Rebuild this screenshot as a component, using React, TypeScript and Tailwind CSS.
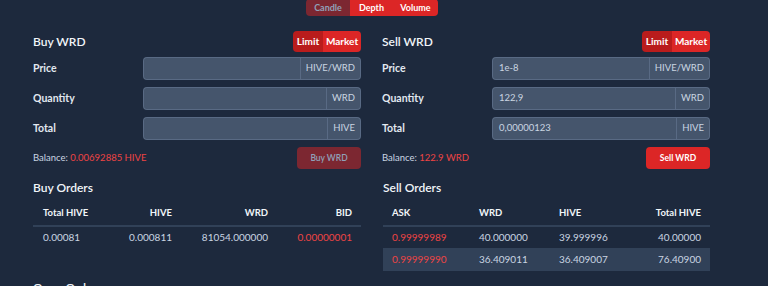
import React from "react";

interface FieldProps {
  label: string;
  value?: string;
  unit: string;
}

const Field = ({ label, value = "", unit }: FieldProps) => {
  return (
    <div className="flex items-center h-[23px]">
      <div className="w-[110px] shrink-0 text-[10.5px] font-bold text-slate-200">{label}</div>
      <div className="flex flex-1 h-full rounded-[4px] border border-slate-500/70 bg-slate-600 overflow-hidden">
        <div className="flex-1 flex items-center px-[6px] text-[9.5px] text-slate-300">{value}</div>
        <div className="flex items-center px-[5px] border-l border-slate-500/70 text-[9.5px] text-slate-300">{unit}</div>
      </div>
    </div>
  );
};

interface TradeFormProps {
  title: string;
  price?: string;
  quantity?: string;
  total?: string;
  balance: string;
  action: string;
  disabled?: boolean;
}

const TradeForm = ({ title, price, quantity, total, balance, action, disabled }: TradeFormProps) => {
  return (
    <div className="flex flex-col w-[328px]">
      <div className="flex items-center justify-between h-[21px] mt-[31px]">
        <h2 className="text-[12px] font-semibold text-slate-100">{title}</h2>
        <div className="flex h-[21px] rounded-[4px] overflow-hidden text-[10px] font-bold text-white">
          <div className="flex items-center justify-center w-[30px] bg-[#b91c1c]">Limit</div>
          <div className="flex items-center justify-center w-[38px] bg-[#dc2626]">Market</div>
        </div>
      </div>
      <div className="flex flex-col gap-[7px] mt-[5px]">
        <Field label="Price" value={price} unit="HIVE/WRD" />
        <Field label="Quantity" value={quantity} unit="WRD" />
        <Field label="Total" value={total} unit="HIVE" />
      </div>
      <div className="flex items-center justify-between mt-[7px] h-[22px]">
        <div className="text-[9.5px] text-slate-300">
          Balance: <span className="text-[#ef4444]">{balance}</span>
        </div>
        <button
          className={
            disabled
              ? "h-[22px] w-[64px] rounded-[4px] bg-[#dc2626]/50 text-[8.5px] font-semibold text-slate-400"
              : "h-[22px] w-[64px] rounded-[4px] bg-[#dc2626] text-[8.5px] font-bold text-white"
          }
        >
          {action}
        </button>
      </div>
    </div>
  );
};

const buyOrders = [{ total: "0.00081", hive: "0.000811", wrd: "81054.000000", bid: "0.00000001" }];

const sellOrders = [
  { ask: "0.99999989", wrd: "40.000000", hive: "39.999996", total: "40.00000" },
  { ask: "0.99999990", wrd: "36.409011", hive: "36.409007", total: "76.40900" },
];

const App = () => {
  return (
    <div className="w-[768px] h-[286px] overflow-hidden bg-slate-800" style={{ fontFamily: "Lato, 'Noto Sans', sans-serif" }}>
      <div className="ml-[33px] w-[677px] relative">
        <div className="absolute left-[273px] top-0 flex h-[17px] -mt-[1px] rounded-[4px] overflow-hidden text-[9px] font-bold">
          <div className="w-[44px] flex items-center justify-center bg-[#dc2626]/50 text-slate-400">Candle</div>
          <div className="w-[43px] flex items-center justify-center bg-[#dc2626] text-white">Depth</div>
          <div className="w-[45px] flex items-center justify-center bg-[#dc2626] text-white">Volume</div>
        </div>
        <div className="flex justify-between">
          <TradeForm title="Buy WRD" balance="0.00692885 HIVE" action="Buy WRD" disabled />
          <TradeForm
            title="Sell WRD"
            price="1e-8"
            quantity="122,9"
            total="0,00000123"
            balance="122.9 WRD"
            action="Sell WRD"
          />
        </div>
        <div className="flex justify-between mt-[8px]">
          <div className="w-[328px]">
            <h2 className="text-[12px] font-semibold text-slate-100 h-[22px] leading-[22px]">Buy Orders</h2>
            <table className="w-full table-fixed mt-[3px]">
              <colgroup>
                <col className="w-[70px]" />
                <col className="w-[79px]" />
                <col className="w-[96px]" />
                <col className="w-[83px]" />
              </colgroup>
              <thead>
                <tr className="border-b-2 border-slate-700 h-[24px] text-slate-100 text-[9.5px]">
                  <th className="text-left font-bold pl-[10px]">Total HIVE</th>
                  <th className="text-right font-bold pr-[10px]">HIVE</th>
                  <th className="text-right font-bold pr-[10px]">WRD</th>
                  <th className="text-right font-bold pr-[9px]">BID</th>
                </tr>
              </thead>
              <tbody>
                {buyOrders.map((o) => (
                  <tr key={o.bid} className="h-[22px] text-slate-300 text-[10px]">
                    <td className="pl-[10px]">{o.total}</td>
                    <td className="text-right pr-[10px]">{o.hive}</td>
                    <td className="text-right pr-[10px]">{o.wrd}</td>
                    <td className="text-right pr-[9px] text-[#ef4444]">{o.bid}</td>
                  </tr>
                ))}
              </tbody>
            </table>
          </div>
          <div className="w-[327px]">
            <h2 className="text-[12px] font-semibold text-slate-100 h-[22px] leading-[22px]">Sell Orders</h2>
            <table className="w-full table-fixed mt-[3px]">
              <colgroup>
                <col className="w-[86px]" />
                <col className="w-[80px]" />
                <col className="w-[71px]" />
                <col className="w-[90px]" />
              </colgroup>
              <thead>
                <tr className="border-b-2 border-slate-700 h-[24px] text-slate-100 text-[9.5px]">
                  <th className="text-left font-bold pl-[9px]">ASK</th>
                  <th className="text-left font-bold pl-[10px]">WRD</th>
                  <th className="text-left font-bold pl-[10px]">HIVE</th>
                  <th className="text-right font-bold pr-[9px]">Total HIVE</th>
                </tr>
              </thead>
              <tbody>
                {sellOrders.map((o, i) => (
                  <tr
                    key={o.ask}
                    className={i === 1 ? "h-[23px] text-slate-300 text-[10px] bg-slate-700" : "h-[22px] text-slate-300 text-[10px]"}
                  >
                    <td className="pl-[9px] text-[#ef4444]">{o.ask}</td>
                    <td className="pl-[10px]">{o.wrd}</td>
                    <td className="pl-[10px]">{o.hive}</td>
                    <td className="text-right pr-[9px]">{o.total}</td>
                  </tr>
                ))}
              </tbody>
            </table>
          </div>
        </div>
        <h2 className="mt-[8px] text-[12px] font-semibold text-slate-100">Open Orders</h2>
      </div>
    </div>
  );
};

export default App;
